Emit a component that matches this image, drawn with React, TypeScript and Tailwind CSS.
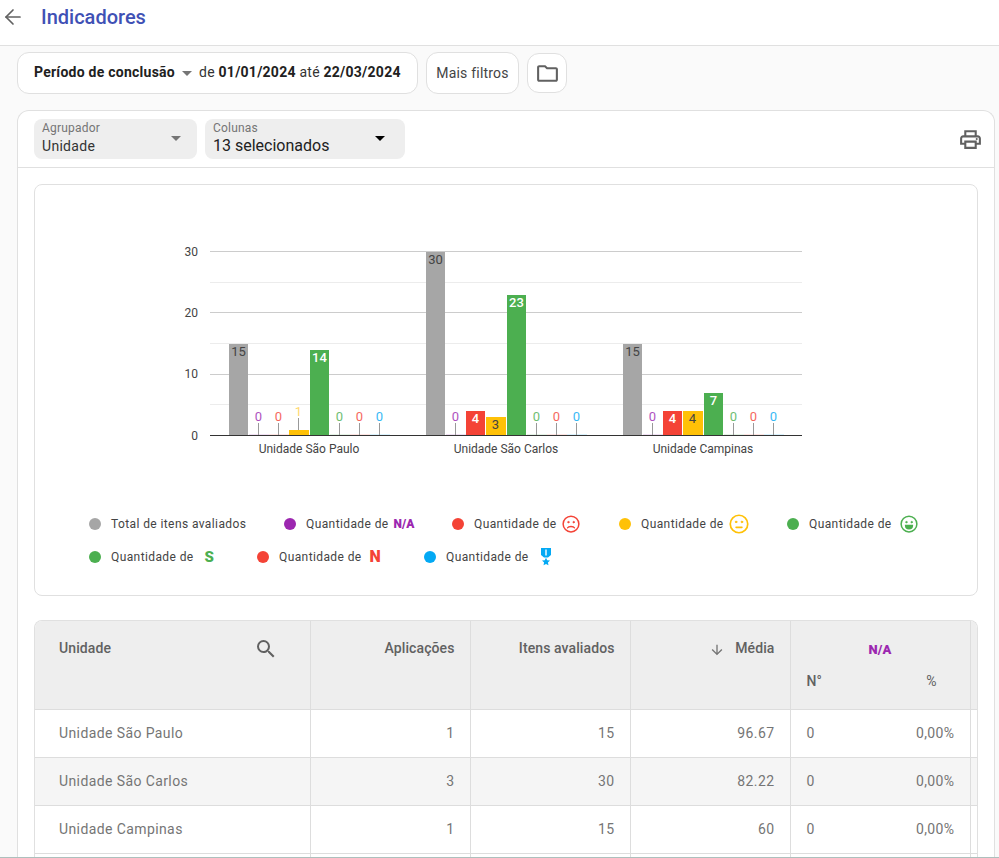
import { ArrowLeft } from "lucide-react";
import { MdArrowDownward, MdOutlineFolder, MdOutlinePrint, MdSearch } from "react-icons/md";
import type { ReactNode } from "react";

const font = "font-['Roboto','Liberation_Sans',sans-serif]";

const colors = {
  gray: "#a6a6a6",
  purple: "#9c27b0",
  red: "#f44336",
  yellow: "#ffc107",
  green: "#4caf50",
  blue: "#03a9f4",
};

const seriesColors = [
  colors.gray,
  colors.purple,
  colors.red,
  colors.yellow,
  colors.green,
  colors.green,
  colors.red,
  colors.blue,
];

const offsets = [0, 20, 40, 60, 81, 101, 121, 141];

const groups = [
  { name: "Unidade São Paulo", x: 229, values: [15, 0, 0, 1, 14, 0, 0, 0] },
  { name: "Unidade São Carlos", x: 426, values: [30, 0, 4, 3, 23, 0, 0, 0] },
  { name: "Unidade Campinas", x: 623, values: [15, 0, 4, 4, 7, 0, 0, 0] },
];

const rows = [
  { name: "Unidade São Paulo", apps: "1", items: "15", avg: "96.67" },
  { name: "Unidade São Carlos", apps: "3", items: "30", avg: "82.22" },
  { name: "Unidade Campinas", apps: "1", items: "15", avg: "60" },
];

const baseY = 435;

function Chart() {
  const major = [251.5, 312.5, 374.5];
  const minor = [282.5, 343.5, 404.5];
  return (
    <svg width="942" height="300" viewBox="35 185 942 300" className="block">
      {minor.map((y) => (
        <line key={y} x1="210" x2="802" y1={y} y2={y} stroke="#ececec" />
      ))}
      {major.map((y) => (
        <line key={y} x1="210" x2="802" y1={y} y2={y} stroke="#cccccc" />
      ))}
      {[
        ["30", 256],
        ["20", 317],
        ["10", 378],
        ["0", 440],
      ].map(([label, y]) => (
        <text key={label} x="198" y={y} textAnchor="end" fontSize="12" fill="#444444" fontFamily="Roboto">
          {label}
        </text>
      ))}
      {groups.map((group) => (
        <g key={group.name} fontFamily="Roboto" fontSize="13">
          {group.values.map((value, i) => {
            const x = group.x + offsets[i];
            const h = Math.round(value * 6.12 - 0.7);
            const color = seriesColors[i];
            const cx = x + 9.5;
            if (value === 0) {
              return (
                <g key={i}>
                  <rect x={x} y={baseY - 1} width="20" height="1" fill={color} opacity="0.15" />
                  <line x1={cx} x2={cx} y1="423" y2="435" stroke="#999999" />
                  <text x={cx} y="421" textAnchor="middle" fill={color} opacity="0.8">
                    0
                  </text>
                </g>
              );
            }
            const inside = h > 12;
            const dark = i === 0 || i === 3;
            return (
              <g key={i}>
                <rect x={x} y={baseY - h} width={i === 3 ? 20 : 19} height={h} fill={color} />
                {inside ? (
                  <text
                    x={cx}
                    y={baseY - h + 12}
                    textAnchor="middle"
                    fill={dark ? "#444444" : "#ffffff"}
                    fontWeight={dark ? 400 : 500}
                  >
                    {value}
                  </text>
                ) : (
                  <>
                    <line x1={cx} x2={cx} y1="418" y2={baseY - h} stroke="#999999" />
                    <text x={cx} y="416" textAnchor="middle" fill={color} opacity="0.6">
                      {value}
                    </text>
                  </>
                )}
              </g>
            );
          })}
          <text x={group.x + 80} y="453" textAnchor="middle" fill="#444444" fontSize="12">
            {group.name}
          </text>
        </g>
      ))}
      <line x1="210" x2="802" y1="435.5" y2="435.5" stroke="#333333" />
    </svg>
  );
}

function Face({ color, mood, size = 18 }: { color: string; mood: "sad" | "neutral" | "happy"; size?: number }) {
  return (
    <svg width={size} height={size} viewBox="0 0 24 24" fill="none" stroke={color} strokeWidth="2" strokeLinecap="round">
      <circle cx="12" cy="12" r="10.5" />
      <circle cx="8.5" cy="9.5" r="1" fill={color} strokeWidth="1" />
      <circle cx="15.5" cy="9.5" r="1" fill={color} strokeWidth="1" />
      {mood === "sad" && <path d="M7.5 17c1.2-2.4 7.8-2.4 9 0" />}
      {mood === "neutral" && <path d="M8.5 16h7" />}
      {mood === "happy" && <path d="M7.5 14h9c0 2.6-2 4.2-4.500 4.200s-4.500-1.600-4.500-4.200z" fill={color} />}
    </svg>
  );
}

function Medal() {
  return (
    <svg width="10" height="18" viewBox="0 0 10 18" fill={colors.blue}>
      <path d="M0 0h10v7l-3 2.600H3L0 7zM4.300 1.400v6.200h1.400V1.400z" fillRule="evenodd" />
      <path d="M5 9.800l1.200 2.500 2.800.3-2.100 1.900.6 2.800L5 16.100l-2.500 1.200.6-2.800L1 12.600l2.800-.3z" />
    </svg>
  );
}

function Tag({ color, children, className = "" }: { color: string; children: ReactNode; className?: string }) {
  return (
    <span className={`font-black ${className}`} style={{ color }}>
      {children}
    </span>
  );
}

function LegendItem({ color, label, icon, width }: { color: string; label: string; icon?: ReactNode; width: string }) {
  return (
    <div className={`flex h-[20px] items-center ${width}`}>
      <span className="mr-[10px] h-3 w-3 shrink-0 rounded-full" style={{ backgroundColor: color }} />
      <span className="mr-[5px] text-[12px] tracking-[0.4px] whitespace-nowrap text-[#444]">{label}</span>
      {icon}
    </div>
  );
}

function Legend() {
  return (
    <div className="ml-[54px] flex flex-col gap-[13px]">
      <div className="flex">
        <LegendItem width="w-[195px]" color={colors.gray} label="Total de itens avaliados" />
        <LegendItem
          width="w-[168px]"
          color={colors.purple}
          label="Quantidade de"
          icon={
            <Tag color={colors.purple} className="text-[12px]">
              N/A
            </Tag>
          }
        />
        <LegendItem width="w-[167px]" color={colors.red} label="Quantidade de" icon={<Face color={colors.red} mood="sad" />} />
        <LegendItem width="w-[168px]" color={colors.yellow} label="Quantidade de" icon={<Face color={colors.yellow} mood="neutral" size={20} />} />
        <LegendItem width="w-[150px]" color={colors.green} label="Quantidade de" icon={<span className="ml-[3px] flex"><Face color={colors.green} mood="happy" /></span>} />
      </div>
      <div className="flex">
        <LegendItem
          width="w-[168px]"
          color={colors.green}
          label="Quantidade de"
          icon={
            <Tag color={colors.green} className="ml-[6px] text-[15px]">
              S
            </Tag>
          }
        />
        <LegendItem
          width="w-[167px]"
          color={colors.red}
          label="Quantidade de"
          icon={
            <Tag color={colors.red} className="ml-[3px] text-[16px]">
              N
            </Tag>
          }
        />
        <LegendItem width="w-[150px]" color={colors.blue} label="Quantidade de" icon={<span className="ml-[7px] mb-[1px] flex"><Medal /></span>} />
      </div>
    </div>
  );
}

function Select({ label, value, strong, width }: { label: string; value: string; strong?: boolean; width: string }) {
  return (
    <div className={`relative h-10 rounded-lg bg-[#eeeeee] pl-2 ${width}`}>
      <div className="pt-[2px] text-[12px] leading-[14px] tracking-[0.2px] text-[#757575]">{label}</div>
      <div className={strong ? "mt-[1px] text-[16px] leading-[20px] text-[#212121]" : "mt-[2px] text-[14px] leading-[18px] tracking-[0.3px] text-[#333]"}>
        {value}
      </div>
      <span
        className={`absolute top-[17px] h-0 w-0 border-x-[5px] border-t-[5px] border-x-transparent ${strong ? "right-[20px] border-t-black" : "right-[16px] border-t-[#757575]"}`}
      />
    </div>
  );
}

function Table() {
  const th = "border-r border-[#dddddd] align-top text-[14px] font-medium tracking-[0.1px] text-[#616161]";
  const td = "border-r border-t border-[#dddddd] text-[14px] tracking-[0.4px] text-[#757575]";
  return (
    <div className="mt-6 overflow-hidden rounded-t-lg border border-[#e0e0e0] border-b-0">
      <table className="w-full table-fixed border-collapse">
        <colgroup>
          <col className="w-[275px]" />
          <col className="w-[160px]" />
          <col className="w-[160px]" />
          <col className="w-[160px]" />
          <col className="w-[180px]" />
          <col />
        </colgroup>
        <thead>
          <tr className="h-[88px] bg-[#eeeeee]">
            <th className={`${th} px-6 pt-[17px] text-left`}>
              <div className="flex items-start justify-between pr-[8px]">
                <span>Unidade</span>
                <MdSearch size={24} className="-mt-[1px] text-[#616161]" />
              </div>
            </th>
            <th className={`${th} pt-[17px] pr-[15px] pl-4 text-right`}>Aplicações</th>
            <th className={`${th} pt-[17px] pr-[15px] pl-4 text-right`}>Itens avaliados</th>
            <th className={`${th} pt-[17px] pr-[15px] pl-4 text-right`}>
              <span className="inline-flex items-center">
                <MdArrowDownward size={16} className="mt-[2px] mr-[10px] text-[#757575]" />
                Média
              </span>
            </th>
            <th className={`${th} px-4 pt-[21px]`}>
              <div className="text-center text-[13px] leading-[16px] font-black text-[#9c27b0]">N/A</div>
              <div className="mt-[13px] flex justify-between pr-[17px]">
                <span>N°</span>
                <span className="font-normal">%</span>
              </div>
            </th>
            <th className="border-[#dddddd]" />
          </tr>
        </thead>
        <tbody>
          {rows.map((row, i) => (
            <tr key={row.name} className={`h-[48px] ${i === 1 ? "bg-[#f5f5f5]" : "bg-white"}`}>
              <td className={`${td} px-6 text-left tracking-[0.2px] text-[#7b6f82]`}>{row.name}</td>
              <td className={`${td} pr-[15px] pl-4 text-right text-[#6f7390]`}>{row.apps}</td>
              <td className={`${td} pr-[15px] pl-4 text-right text-[#6f7390]`}>{row.items}</td>
              <td className={`${td} pr-[15px] pl-4 text-right`}>{row.avg}</td>
              <td className={td}>
                <div className="flex justify-between pr-[15px] pl-4">
                  <span>0</span>
                  <span>0,00%</span>
                </div>
              </td>
              <td className="border-t border-[#dddddd]" />
            </tr>
          ))}
          <tr className="h-[48px]">
            <td className={td} />
            <td className={td} />
            <td className={td} />
            <td className={td} />
            <td className={td} />
            <td className="border-t border-[#dddddd]" />
          </tr>
        </tbody>
      </table>
    </div>
  );
}

export default function App() {
  return (
    <div className={`flex h-[858px] flex-col overflow-hidden bg-[#fafafa] ${font}`}>
      <header className="flex h-[46px] shrink-0 items-start border-b border-[#e0e0e0] bg-white">
        <ArrowLeft size={24} strokeWidth={1.7} className="mt-[5px] ml-px text-[#616161]" />
        <h1 className="mt-[4px] ml-4 text-[20px] leading-[26px] font-medium text-[#3f51b5]">Indicadores</h1>
      </header>

      <div className="flex shrink-0 items-center gap-2 pt-[6px] pl-[17px]">
        <div className="flex h-[42px] w-[401px] items-center rounded-xl border border-[#e0e0e0] bg-white pb-[1px] pl-4 text-[14px] tracking-[0.25px] text-[#333]">
          <span className="font-bold text-[#212121]">Período de conclusão</span>
          <span className="mx-[7px] mt-[2px] h-0 w-0 border-x-[5px] border-t-[5px] border-x-transparent border-t-[#757575]" />
          <span>de&nbsp;</span>
          <span className="font-bold text-[#212121]">01/01/2024</span>
          <span>&nbsp;até&nbsp;</span>
          <span className="font-bold text-[#212121]">22/03/2024</span>
        </div>
        <div className="flex h-[42px] w-[93px] items-center justify-center rounded-xl border border-[#e0e0e0] bg-white text-[14px] tracking-[0.2px] text-[#444]">
          Mais filtros
        </div>
        <div className="flex h-10 w-10 items-center justify-center rounded-xl border border-[#e0e0e0] bg-white">
          <MdOutlineFolder size={25} className="text-[#616161]" />
        </div>
      </div>

      <div className="mt-4 mr-1 ml-[17px] min-h-0 flex-1 overflow-hidden rounded-t-xl border border-b-0 border-[#e0e0e0] bg-white">
        <div className="flex h-[57px] items-start gap-2 border-b border-[#e0e0e0] pt-2 pr-[11px] pl-4">
          <Select label="Agrupador" value="Unidade" width="w-[163px]" />
          <Select label="Colunas" value="13 selecionados" strong width="w-[200px]" />
          <MdOutlinePrint size={25} className="mt-2 ml-auto text-[#616161]" />
        </div>
        <div className="px-4 pt-4">
          <div className="h-[412px] rounded-lg border border-[#e0e0e0]">
            <Chart />
            <div className="mt-[29px]">
              <Legend />
            </div>
          </div>
          <Table />
        </div>
      </div>
      <div className="h-px shrink-0 bg-[#adc0bd]" />
    </div>
  );
}
